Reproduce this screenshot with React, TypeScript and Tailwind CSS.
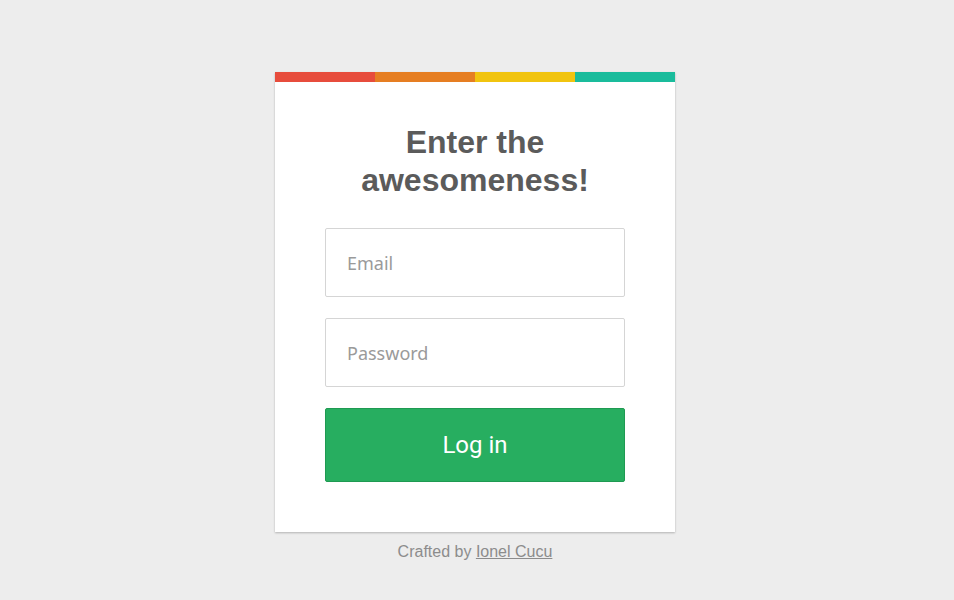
import React from "react";

export default function App() {
  return (
    <div className="min-h-[600px] w-full bg-[#ededed] pt-[72px] pr-[4px] flex flex-col items-center" style={{ fontFamily: '"Liberation Sans", Arial, sans-serif' }}>
      <div className="w-[400px] bg-white shadow-[0_1px_2px_rgba(0,0,0,0.25)]">
        <div className="flex h-[10px]">
          <div className="flex-1 bg-[#e74c3c]" />
          <div className="flex-1 bg-[#e67e22]" />
          <div className="flex-1 bg-[#f1c40f]" />
          <div className="flex-1 bg-[#1abc9c]" />
        </div>
        <div className="px-[50px] pt-[41px] pb-[50px]">
          <h1 className="text-center text-[32px] leading-[38px] font-bold text-[#5b5b5b]">
            Enter the
            <br />
            awesomeness!
          </h1>
          <form className="mt-[29px] flex flex-col gap-[21px]" onSubmit={(e) => e.preventDefault()}>
            <input
              type="email"
              placeholder="Email"
              className="h-[69px] w-full rounded-[2px] border border-[#d5d5d5] px-[21px] text-[18px] text-[#555] placeholder:text-[#9a9a9a] outline-none"
              style={{ fontFamily: '"Noto Sans", sans-serif' }}
            />
            <input
              type="password"
              placeholder="Password"
              className="h-[69px] w-full rounded-[2px] border border-[#d5d5d5] px-[21px] text-[18px] text-[#555] placeholder:text-[#9a9a9a] outline-none"
              style={{ fontFamily: '"Noto Sans", sans-serif' }}
            />
            <button
              type="submit"
              className="h-[74px] w-full rounded-[2px] bg-[#27ae60] border border-[#1f9a52] text-white text-[24px]"
              style={{ fontFamily: 'Roboto, sans-serif' }}
            >
              Log in
            </button>
          </form>
        </div>
      </div>
      <p className="mt-[10px] text-[16px] leading-[20px] text-[#8c8c8c]">
        Crafted by <a href="#" className="underline text-[#8c8c8c]">Ionel Cucu</a>
      </p>
    </div>
  );
}
